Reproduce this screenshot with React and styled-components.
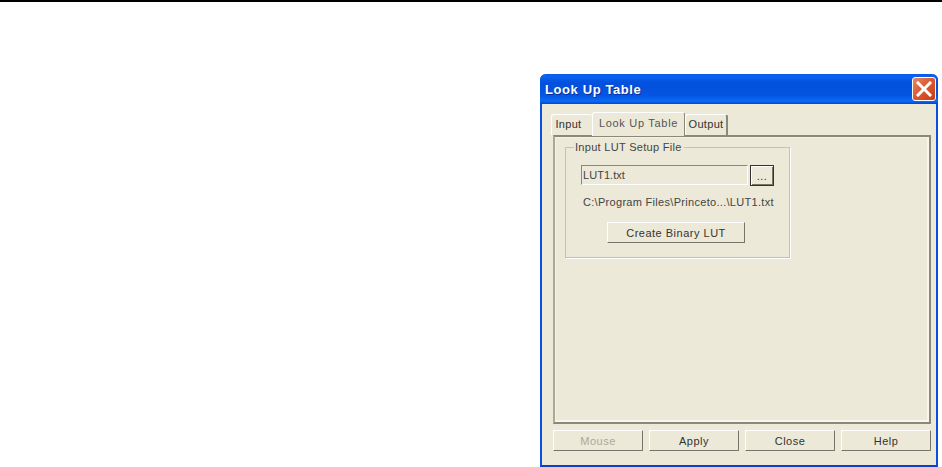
import React from 'react';
import styled, { createGlobalStyle } from 'styled-components';

const GlobalStyle = createGlobalStyle`
  html, body {
    margin: 0;
    padding: 0;
    background: #fff;
    overflow: hidden;
  }
`;

const Page = styled.div`
  width: 942px;
  height: 467px;
  overflow: hidden;
  font-family: 'Liberation Sans', Arial, sans-serif;
  font-size: 11px;
  color: #333;
`;

const TopRule = styled.div`
  height: 2px;
  background: #000;
  margin-bottom: 72px;
`;

const Dialog = styled.div`
  width: 398px;
  height: 393px;
  margin-left: 540px;
  display: flex;
  flex-direction: column;
  box-sizing: border-box;
  background: #ece9d8;
  border-radius: 6px 6px 0 0;
  border-left: 2px solid #0a50e0;
  border-right: 2px solid #0a50e0;
  border-bottom: 2px solid #0a3fc8;
`;

const TitleBar = styled.div`
  height: 30px;
  margin: 0 -2px;
  padding: 0 2px 0 5px;
  display: flex;
  align-items: center;
  justify-content: space-between;
  flex-shrink: 0;
  border-radius: 6px 6px 0 0;
  background: linear-gradient(180deg, #0a5ae8 0%, #0a62f0 8%, #0350dc 30%, #0355e2 70%, #0a6af4 90%, #0346d0 100%);
`;

const Title = styled.span`
  color: #fff;
  font-size: 13px;
  font-weight: 700;
  letter-spacing: 0.6px;
  text-shadow: 1px 1px 0 #0a2f9c;
`;

const CloseButton = styled.button`
  width: 24px;
  height: 24px;
  padding: 0;
  display: flex;
  align-items: center;
  justify-content: center;
  border: 1px solid #fff;
  border-radius: 3px;
  background: linear-gradient(135deg, #e88868 0%, #dd5a32 45%, #c83c14 100%);
`;

const Body = styled.div`
  flex: 1;
  display: flex;
  flex-direction: column;
  padding: 7px 5px 0 11px;
`;

const TabRow = styled.div`
  display: flex;
  align-items: flex-end;
  height: 24px;
  margin-left: -2px;
  position: relative;
  z-index: 1;
`;

const Tab = styled.div`
  box-sizing: border-box;
  width: ${(p) => p.$width}px;
  height: ${(p) => (p.$active ? 24 : 21)}px;
  margin-bottom: ${(p) => (p.$active ? -1 : 0)}px;
  padding: 0 ${(p) => (p.$plain ? 7 : 0)}px 3px 0;
  display: flex;
  align-items: center;
  justify-content: center;
  letter-spacing: ${(p) => (p.$active ? 0.7 : 0.3)}px;
  background: #ece9d8;
  border-top: 1px solid #fff;
  border-left: 1px solid #fff;
  border-right: ${(p) => (p.$plain ? 'none' : p.$active ? '1px solid #8a8878' : '2px solid #8a8878')};
  border-radius: 3px 3px 0 0;
  color: ${(p) => (p.$active ? '#555' : '#333')};
`;

const TabPanel = styled.div`
  flex: 1;
  box-sizing: border-box;
  width: 378px;
  padding: 4px 10px;
  border-top: 2px solid #8a8878;
  border-left: 2px solid #aaa896;
  border-right: 2px solid #8a8878;
  border-bottom: 2px solid #8a8878;
  box-shadow: inset 1px 1px 0 #f4f2e6, inset -2px -2px 0 #f8f6ec;
`;

const GroupBox = styled.fieldset`
  box-sizing: border-box;
  width: 225px;
  height: 117px;
  margin: 0;
  padding: 12px 15px 0;
  border: 1px solid #c4c2b4;
  box-shadow: 1px 1px 0 #fff;
  display: flex;
  flex-direction: column;
`;

const GroupLegend = styled.legend`
  padding: 0 2px 0 1px;
  margin-left: -7px;
  letter-spacing: 0.3px;
  color: #444;
`;

const FileRow = styled.div`
  display: flex;
  gap: 2px;
`;

const FileInput = styled.div`
  box-sizing: border-box;
  width: 167px;
  height: 20px;
  padding-left: 1px;
  display: flex;
  align-items: center;
  letter-spacing: 0.05px;
  color: #444;
  background: #ece9d8;
  border-top: 1px solid #8a8878;
  border-left: 1px solid #8a8878;
  border-right: 1px solid #fff;
  border-bottom: 1px solid #fff;
`;

const Button = styled.button`
  box-sizing: border-box;
  width: ${(p) => p.$width}px;
  height: 21px;
  padding: 1px 0 0;
  font: inherit;
  letter-spacing: 0.5px;
  color: ${(p) => (p.$disabled ? '#aca899' : '#333')};
  background: #ece9d8;
  border-top: 1px solid #fff;
  border-left: 1px solid #fff;
  border-right: 1px solid #77756a;
  border-bottom: 1px solid #77756a;
`;

const BrowseButton = styled(Button)`
  border: 1px solid #333;
  box-shadow: inset 1px 1px 0 #fff, inset -1px -1px 0 #77756a;
`;

const PathText = styled.div`
  margin: 9px 0 0 2px;
  height: 14px;
  line-height: 14px;
  letter-spacing: 0.3px;
  white-space: nowrap;
  color: #444;
`;

const CreateRow = styled.div`
  margin: 13px 0 0 26px;
`;

const ButtonBar = styled.div`
  height: 41px;
  display: flex;
  gap: 6px;
  padding-top: 6px;
  flex-shrink: 0;
  box-sizing: border-box;
`;

const App = () => (
  <Page>
    <GlobalStyle />
    <TopRule />
    <Dialog>
      <TitleBar>
        <Title>Look Up Table</Title>
        <CloseButton aria-label='Close'>
          <svg width='16' height='16' viewBox='0 0 16 16'>
            <path d='M2 2 L14 14 M14 2 L2 14' stroke='#fff' strokeWidth='3' strokeLinecap='square' />
          </svg>
        </CloseButton>
      </TitleBar>
      <Body>
        <TabRow>
          <Tab $width={41} $plain>Input</Tab>
          <Tab $width={93} $active>Look Up Table</Tab>
          <Tab $width={43}>Output</Tab>
        </TabRow>
        <TabPanel>
          <GroupBox>
            <GroupLegend>Input LUT Setup File</GroupLegend>
            <FileRow>
              <FileInput>LUT1.txt</FileInput>
              <BrowseButton $width={24}>...</BrowseButton>
            </FileRow>
            <PathText>C:\Program Files\Princeto...\LUT1.txt</PathText>
            <CreateRow>
              <Button $width={138}>Create Binary LUT</Button>
            </CreateRow>
          </GroupBox>
        </TabPanel>
        <ButtonBar>
          <Button $width={90} $disabled>Mouse</Button>
          <Button $width={90}>Apply</Button>
          <Button $width={90}>Close</Button>
          <Button $width={90}>Help</Button>
        </ButtonBar>
      </Body>
    </Dialog>
  </Page>
);

export default App;
